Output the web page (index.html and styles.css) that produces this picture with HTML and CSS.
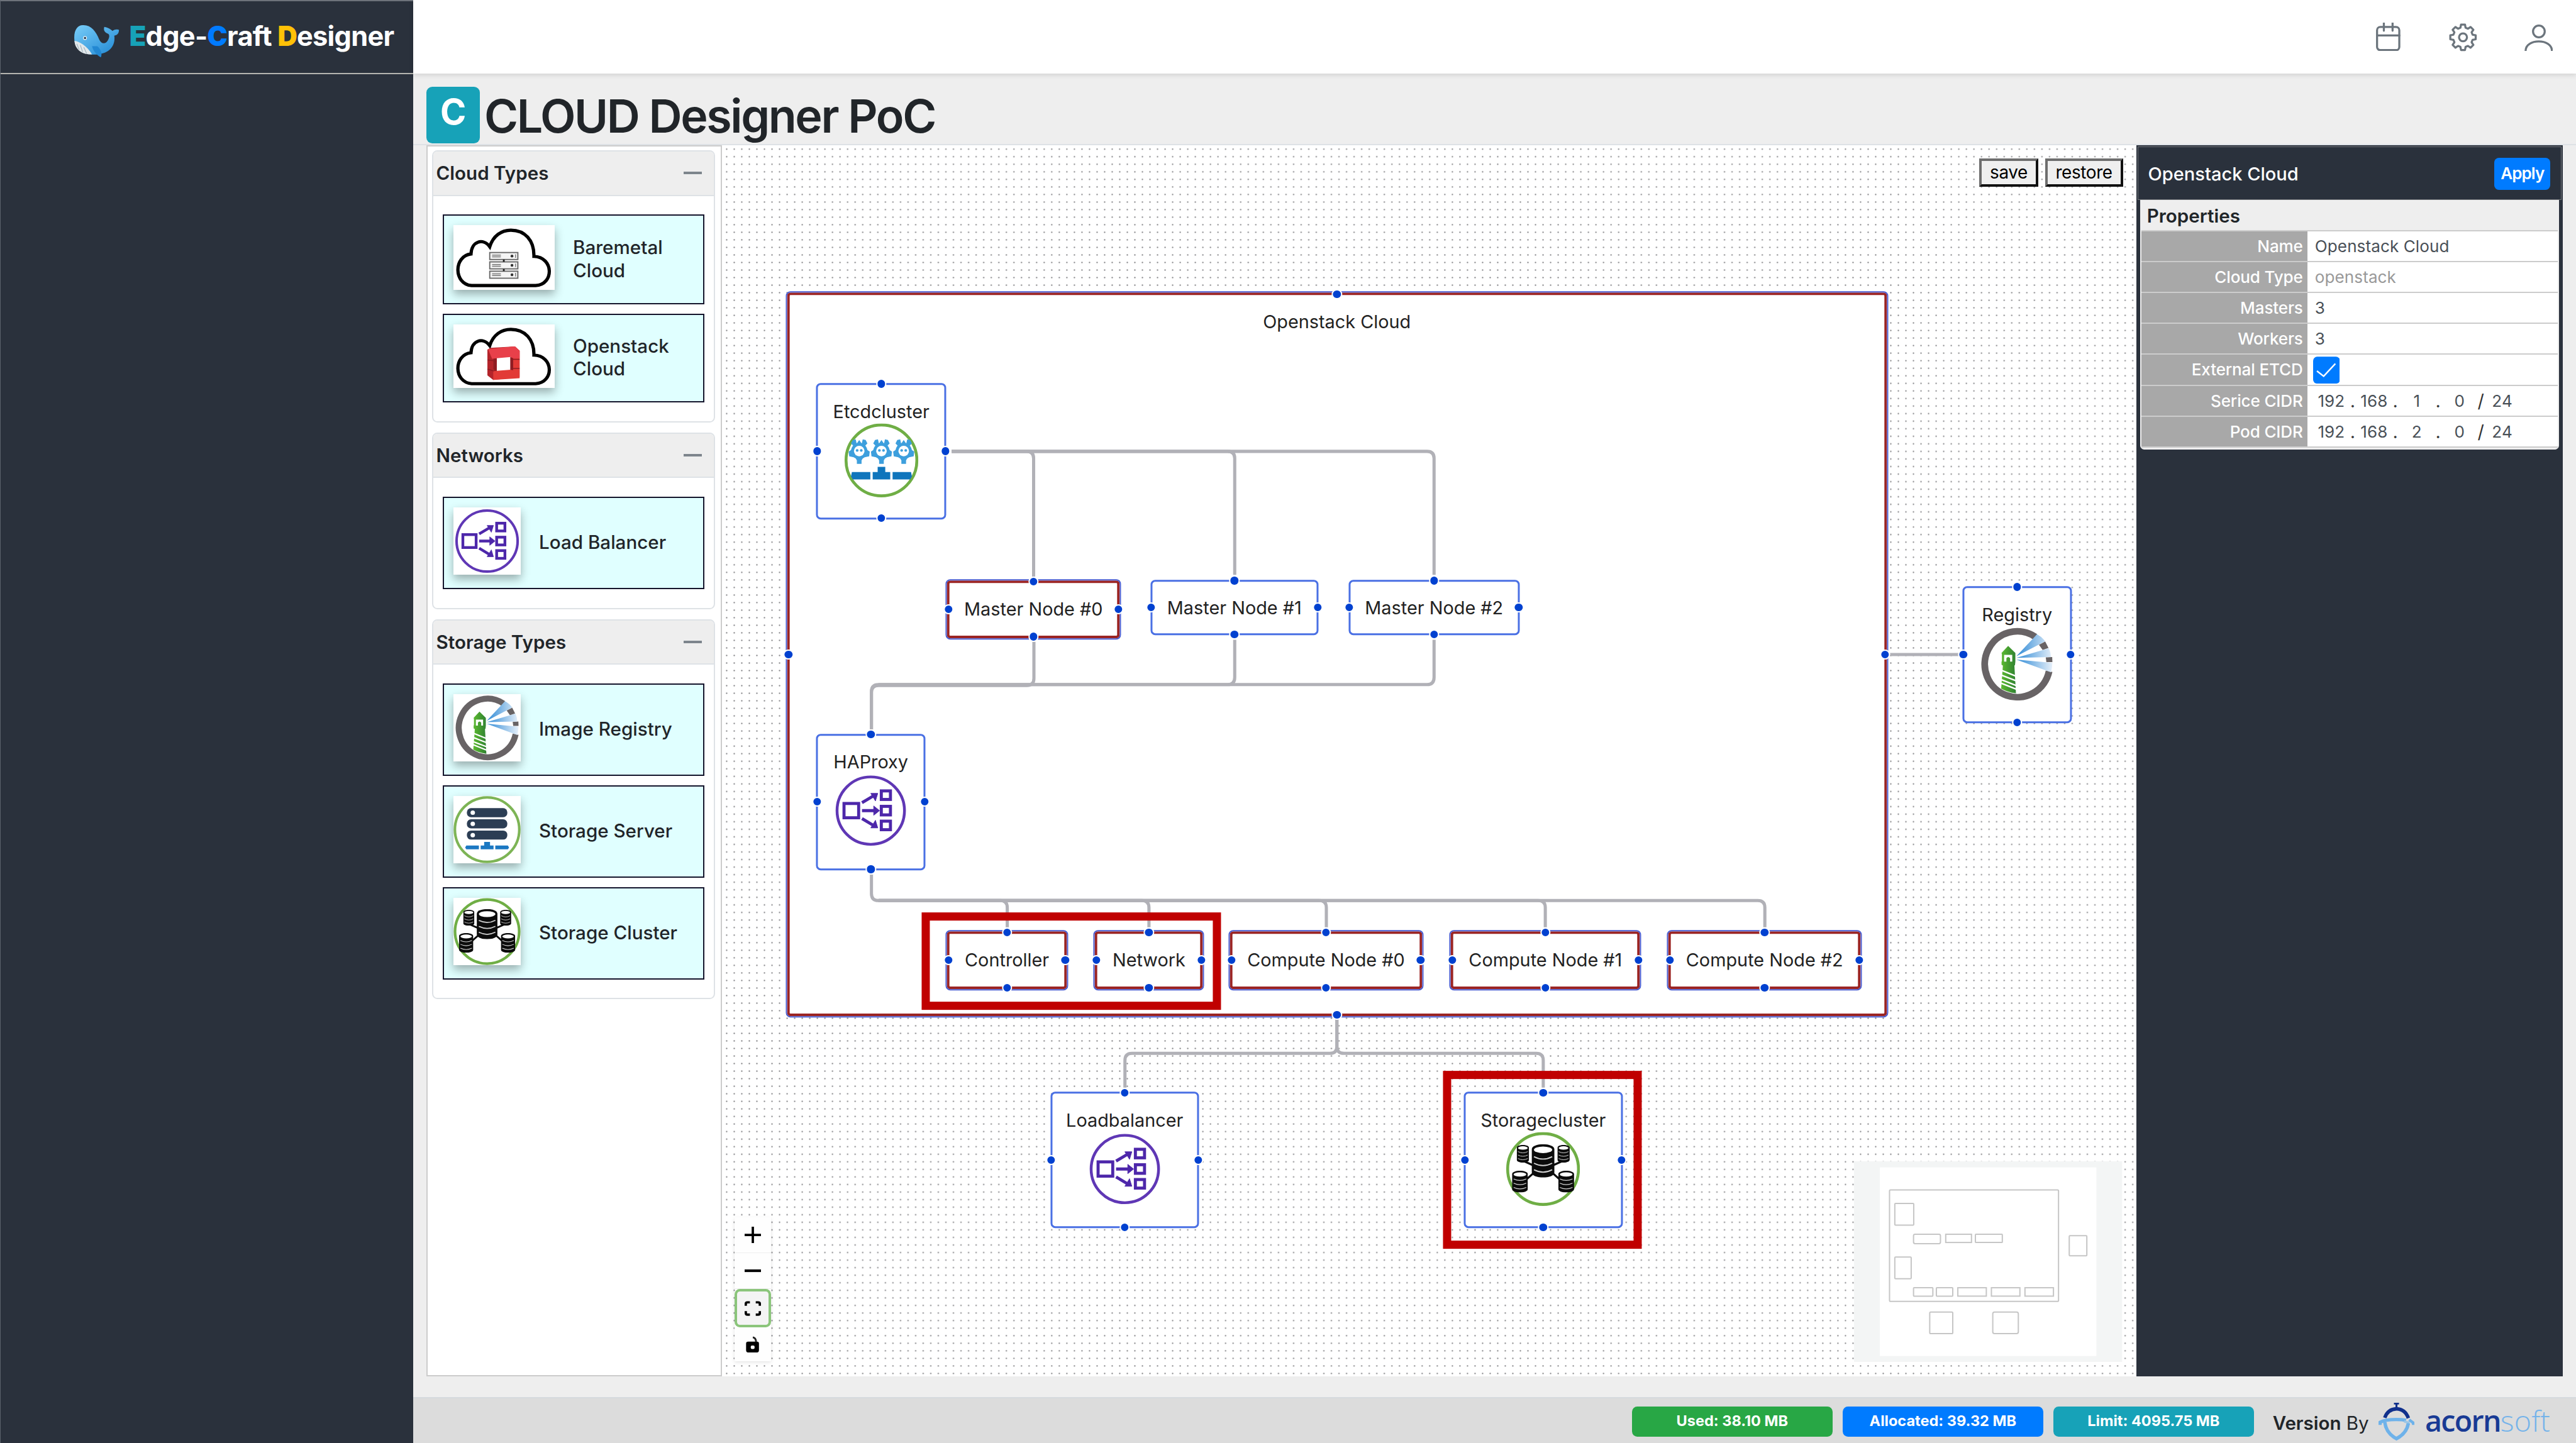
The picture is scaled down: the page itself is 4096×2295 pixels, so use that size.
FILE: index.html
```html
<!DOCTYPE html>
<html lang="en">
<head>
<meta charset="utf-8">
<title>Edge-Craft Designer</title>
<link rel="stylesheet" href="styles.css">
</head>
<body>
<svg class="defs" aria-hidden="true">
  <defs>
    <linearGradient id="whale-skin" x1="0" y1="0" x2="1" y2="1"><stop offset="0" stop-color="#79cdf8"/><stop offset="1" stop-color="#1f87d3"/></linearGradient>
    <linearGradient id="tower" x1="0" x2="1"><stop offset="0" stop-color="#5cba2f"/><stop offset="1" stop-color="#2f8132"/></linearGradient>
    <linearGradient id="beam" x1="0" x2="1"><stop offset="0" stop-color="#2f8ad6"/><stop offset="1" stop-color="#e6f0fa"/></linearGradient>
    <symbol id="cloud" viewBox="0 0 173 111" preserveAspectRatio="none">
      <path d="M31 103.6C0 101 0 53 30 49.5C31 27 51 22 62 37C68 18 82 8.7 98 8.7C122 8.7 138 26 137.5 53.6C172 55 172 102 140.3 103.6Z" fill="#fff" stroke="#000" stroke-width="5.6"/>
    </symbol>
    <symbol id="balancer" viewBox="-63.5 -63.5 127 127">
      <circle r="57.6" fill="#fff" stroke="#5f37b5" stroke-width="4.8"/>
      <g fill="none" stroke="#4d27aa" stroke-width="5.2">
        <rect x="-45.7" y="-12.2" width="25" height="24.4"/>
        <rect x="18" y="-33.7" width="15.6" height="14.6"/>
        <rect x="18" y="-7.3" width="15.6" height="14.6"/>
        <rect x="18" y="18" width="15.6" height="14.6"/>
        <path d="M-15-13.500L5-25.500M-15 0H10M-15 13.500L5 25.500"/>
      </g>
      <path d="M12-29.500L0-29.500L8-16.500ZM5-8L15 0L5 8ZM12 29.500L0 29.500L8 16.500Z" fill="#4d27aa" stroke="#4d27aa" stroke-width="1"/>
    </symbol>
    <symbol id="lighthouse" viewBox="731 326 374 386" preserveAspectRatio="none">
      <path d="M1011 379A167 171 0 1 0 1082 558" fill="none" stroke="#686365" stroke-width="35"/>
      <path d="M1030 420L1062 403L1079 437L1049 447ZM1065 486L1098 484L1099 510L1068 510Z" fill="#686365"/>
      <path d="M914 480L1020 366Q1046 380 1062 402ZM914 488L1081 438Q1091 460 1092 484ZM914 497L1099 514Q1098 540 1092 563Z" fill="url(#beam)"/>
      <path d="M872 426L909 463V508L907 526L904 528L912 672Q872 668 836 648L845 528L838 524V508L840 505V470L838 463Z" fill="url(#tower)"/>
      <path d="M851 473H893V508H882V490Q872 478 863 490V508H851Z" fill="#fff"/>
      <path d="M838 553L912 583M838 578L914 608M838 602L914 632M836 620L916 652" stroke="#fff" stroke-width="8"/>
    </symbol>
    <symbol id="disk" viewBox="0 0 40 56" preserveAspectRatio="none">
      <path d="M0 9C0-3 40-3 40 9V47C40 59 0 59 0 47Z" fill="#0b0b0b"/>
      <ellipse cx="20" cy="9.500" rx="16" ry="5.500" fill="#fff"/>
      <path d="M4 21Q20 29 36 21M4 32Q20 40 36 32M4 43Q20 51 36 43" fill="none" stroke="#d0d0d0" stroke-width="2"/>
    </symbol>
    <symbol id="cluster" viewBox="-63.5 -63.5 127 127">
      <circle r="60.5" fill="#fff" stroke="#6fae45" stroke-width="5"/>
      <path d="M-34-14L-16-6M34-14L16-6M-30 19L-14 5M30 19L14 5" stroke="#0b0b0b" stroke-width="3.500"/>
      <use href="#disk" x="-19.500" y="-42.500" width="39" height="57"/>
      <use href="#disk" x="-45" y="-41" width="21" height="30"/>
      <use href="#disk" x="24.500" y="-41" width="21" height="30"/>
      <use href="#disk" x="-53" y="3" width="27" height="37"/>
      <use href="#disk" x="26" y="3" width="27" height="37"/>
    </symbol>
    <symbol id="gear" viewBox="-19 -22 38 44">
      <g fill="#3d9fdd">
        <circle cy="-1" r="14"/>
        <path d="M-4-12L-6-21L-11-20L-14-14L-9-9ZM4-12L6-21L11-20L14-14L9-9ZM-4-14L0-20L4-14ZM-12-4L-18 0L-17 8L-8 10ZM12-4L18 0L17 8L8 10ZM-7 10L-4 15V21H4V15L7 10Z"/>
      </g>
      <circle cy="-1" r="9" fill="#fff"/>
      <circle cx="-3.500" cy="-2" r="2.300" fill="#3d9fdd"/><circle cx="3.500" cy="-2" r="2.300" fill="#3d9fdd"/>
    </symbol>
    <symbol id="etcd" viewBox="-63.5 -63.5 127 127">
      <circle r="60.5" fill="#fff" stroke="#6fae45" stroke-width="5"/>
      <use href="#gear" x="-57" y="-37" width="38" height="44"/>
      <use href="#gear" x="-19" y="-37" width="38" height="44"/>
      <use href="#gear" x="19" y="-37" width="38" height="44"/>
      <path d="M-50.500 20H-19V32.500H-49L-52 27ZM-15 20H-6.500V11H6.500V20H15V32.500H-15ZM19 20H50.500L52 27L49 32.500H19Z" fill="#0f75bc"/>
    </symbol>
  </defs>
</svg>

<div class="app">
  <aside class="sidebar">
    <div class="brand">
      <svg class="whale" viewBox="0 0 77 56">
        <path d="M1 28C-1 10 6 1 15 1C29 0 38 12 43 25C47 34 54 34 58 27C61 22 61 18 59 16C53 14 50 10 52 4C58 5 63 8 66 11C70 8 74 8 77 9C77 15 74 18 69 19C71 32 65 43 53 48C45 51 36 52 28 51C13 50 3 42 1 28Z" fill="url(#whale-skin)"/>
        <path d="M1 28C9 29 22 36 31 51C14 52 2 43 1 28Z" fill="#e2e8eb"/>
        <path d="M5 33L9 43M11 35L15 47M17 39L22 50" stroke="#9fb0ba" stroke-width="1.200"/>
        <path d="M31 37C33 45 39 52 46 56C49 50 46 42 40 37Z" fill="#2388d2"/>
        <circle cx="19" cy="23" r="3.200" fill="#fff"/><circle cx="19" cy="23" r="2" fill="#28445c"/>
      </svg>
      <span class="brand-name"><b class="teal">E</b>dge-<b class="blue">C</b>raft <b class="amber">D</b>esigner</span>
    </div>
  </aside>

  <div class="main">
    <header class="topbar">
      <svg class="calendar" viewBox="0 0 42 49"><rect x="1.800" y="7.500" width="38" height="39.500" rx="5.500"/><path d="M2 22H40M13.400 .8V13.700M28.300 .8V13.700"/></svg>
      <svg class="settings" viewBox="-24 -24 48 48"><path d="M16.400-4.400L21.700-3.400V3.400L16.400 4.400L14.700 8.500L17.750 12.940L12.940 17.750L8.500 14.700L4.400 16.400L3.400 21.700H-3.400L-4.400 16.400L-8.500 14.700L-12.940 17.750L-17.750 12.940L-14.700 8.500L-16.400 4.400L-21.700 3.400V-3.400L-16.400-4.400L-14.700-8.500L-17.750-12.940L-12.940-17.750L-8.500-14.700L-4.400-16.400L-3.400-21.700H3.400L4.400-16.400L8.500-14.700L12.940-17.750L17.750-12.940L14.700-8.500Z"/><circle r="6.800"/></svg>
      <svg class="user" viewBox="0 0 49 46"><circle cx="24.700" cy="11.800" r="10"/><path d="M2 45C2 23.500 47 23.500 47 45"/></svg>
    </header>

    <div class="title">
      <span class="title-badge"><span>C</span></span>
      <h1>CLOUD Designer PoC</h1>
    </div>

    <div class="workspace">
      <section class="palette">
        <div class="card">
          <div class="card-head"><span>Cloud Types</span><i class="collapse"></i></div>
          <div class="card-body">
            <div class="item">
              <svg class="thumb wide" viewBox="0 0 173 111" preserveAspectRatio="none">
                <use href="#cloud" width="173" height="111"/>
                <g fill="#f4f4f4" stroke="#666" stroke-width="2"><rect x="62" y="47" width="48" height="12"/><rect x="62" y="63" width="48" height="12"/><rect x="62" y="79" width="48" height="12"/></g>
                <path d="M66 51.500H81M66 54.500H81M66 67.500H81M66 70.500H81M66 83.500H81M66 86.500H81" stroke="#777" stroke-width="1.600"/>
                <path d="M86 59V63M86 75V79" stroke="#222" stroke-width="3"/>
                <g fill="#333"><circle cx="100" cy="53" r="2.400"/><circle cx="100" cy="69" r="2.400"/><circle cx="100" cy="85" r="2.400"/></g>
                <path d="M106 50V56M106 66V72M106 82V88" stroke="#777" stroke-width="1.500"/>
              </svg>
              <span>Baremetal Cloud</span>
            </div>
            <div class="item">
              <svg class="thumb wide short" viewBox="0 0 173 111" preserveAspectRatio="none">
                <use href="#cloud" width="173" height="111"/>
                <path d="M58 44L63 41L105 38.500L113 46V92L68 97L58 89Z" fill="#b3242a"/>
                <path d="M59 43L105 38.500L113 46L113 94L68 97V50Z" fill="#e23a36"/>
                <path d="M59 43L105 38.500L113 46L113 59L66 60Z" fill="#e8404a"/>
                <path d="M74 59L98 57V79L74 81Z" fill="#fff"/>
                <path d="M97 57L102 59V80L97 79ZM68 60L74 59V81L68 79Z" fill="#8f1c22"/>
                <path d="M58 62L74 64M58 78L68 81L74 80M98 61H113M98 77H113" stroke="#8f1c22" stroke-width="1.600" fill="none"/>
              </svg>
              <span>Openstack Cloud</span>
            </div>
          </div>
        </div>

        <div class="card">
          <div class="card-head"><span>Networks</span><i class="collapse"></i></div>
          <div class="card-body">
            <div class="item"><svg class="thumb"><use href="#balancer"/></svg><span>Load Balancer</span></div>
          </div>
        </div>

        <div class="card">
          <div class="card-head"><span>Storage Types</span><i class="collapse"></i></div>
          <div class="card-body">
            <div class="item"><svg class="thumb" viewBox="0 0 115 115"><use href="#lighthouse" x="3" y="0.500" width="110" height="113"/></svg><span>Image Registry</span></div>
            <div class="item">
              <svg class="thumb" viewBox="0 0 115 115">
                <circle cx="57.500" cy="57.500" r="55" fill="#fff" stroke="#7db455" stroke-width="4.400"/>
                <g fill="#2c3e54"><rect x="23" y="20.700" width="69" height="15.500" rx="7"/><rect x="23" y="39.800" width="69" height="15.500" rx="7"/><rect x="23" y="59" width="69" height="15.500" rx="7"/></g>
                <g fill="#fff"><circle cx="33" cy="28.500" r="3.800"/><circle cx="33" cy="47.600" r="3.800"/><circle cx="33" cy="66.800" r="3.800"/></g>
                <path d="M22 84.500H43.500V91H22L20 88ZM46.500 84.500H52.500V78.500H62.500V84.500H68.500V91H46.500ZM71.500 84.500H93L95 88L93 91H71.500Z" fill="#1b78c2"/>
              </svg>
              <span>Storage Server</span>
            </div>
            <div class="item"><svg class="thumb"><use href="#cluster"/></svg><span>Storage Cluster</span></div>
          </div>
        </div>
      </section>

      <section class="canvas">
        <div class="flow">
          <svg class="layer" viewBox="0 0 4400 2465">
            <defs><pattern id="grid" x="1234.240" y="248.150" width="12.912" height="12.912" patternUnits="userSpaceOnUse"><circle cx="6.456" cy="6.456" r="1.200" fill="#88888b"/></pattern></defs>
            <rect x="1232" y="247" width="2418" height="2104" fill="url(#grid)"/>
          </svg>
          <div class="node group selected n-cloud"><span>Openstack Cloud</span></div>
          <svg class="layer" viewBox="0 0 4400 2465">
            <g class="edges">
              <path d="M1625 771H1753Q1765 771 1765 783V985"/>
              <path d="M1625 771H2096.500Q2108.500 771 2108.500 783V982"/>
              <path d="M1625 771H2437Q2449 771 2449 783V982"/>
              <path d="M1765.500 1096V1159Q1765.500 1171 1753.500 1171H1500Q1488 1171 1488 1183V1246"/>
              <path d="M2108.500 1093V1157Q2108.500 1169.500 2096.500 1169.500H1500Q1488 1169.500 1488 1181.500V1246"/>
              <path d="M2449 1093V1157Q2449 1169.500 2437 1169.500H1500"/>
              <path d="M1488 1494V1526.500Q1488 1538.500 1500 1538.500H1708Q1720 1538.500 1720 1550.500V1584"/>
              <path d="M1500 1538.500H1950Q1962 1538.500 1962 1550.500V1584"/>
              <path d="M1500 1538.500H2253Q2265 1538.500 2265 1550.500V1584"/>
              <path d="M1500 1538.500H2627Q2639 1538.500 2639 1550.500V1584"/>
              <path d="M1500 1538.500H3002Q3014 1538.500 3014 1550.500V1584"/>
              <path d="M2283 1741V1787.500Q2283 1799.500 2271 1799.500H1933Q1921 1799.500 1921 1811.500V1858"/>
              <path d="M2283 1741V1787.500Q2283 1799.500 2295 1799.500H2623.500Q2635.500 1799.500 2635.500 1811.500V1858"/>
              <path d="M3228 1118H3345"/>
            </g>
          </svg>
          <div class="handles n-cloud selected"><i class="t"></i><i class="r"></i><i class="b"></i><i class="l"></i></div>

          <div class="node tall n-etcd"><span>Etcdcluster</span><svg><use href="#etcd"/></svg><i class="t"></i><i class="r"></i><i class="b"></i><i class="l"></i></div>
          <div class="node selected n-m0"><span>Master Node #0</span><i class="t"></i><i class="r"></i><i class="b"></i><i class="l"></i></div>
          <div class="node n-m1"><span>Master Node #1</span><i class="t"></i><i class="r"></i><i class="b"></i><i class="l"></i></div>
          <div class="node n-m2"><span>Master Node #2</span><i class="t"></i><i class="r"></i><i class="b"></i><i class="l"></i></div>
          <div class="node tall n-haproxy"><span>HAProxy</span><svg><use href="#balancer"/></svg><i class="t"></i><i class="r"></i><i class="b"></i><i class="l"></i></div>
          <div class="node selected n-controller"><span>Controller</span><i class="t"></i><i class="r"></i><i class="b"></i><i class="l"></i></div>
          <div class="node selected n-network"><span>Network</span><i class="t"></i><i class="r"></i><i class="b"></i><i class="l"></i></div>
          <div class="node selected n-c0"><span>Compute Node #0</span><i class="t"></i><i class="r"></i><i class="b"></i><i class="l"></i></div>
          <div class="node selected n-c1"><span>Compute Node #1</span><i class="t"></i><i class="r"></i><i class="b"></i><i class="l"></i></div>
          <div class="node selected n-c2"><span>Compute Node #2</span><i class="t"></i><i class="r"></i><i class="b"></i><i class="l"></i></div>
          <div class="node tall n-registry"><span>Registry</span><svg viewBox="0 0 127 127"><use href="#lighthouse" x="1" y="0.500" width="124.500" height="127"/></svg><i class="t"></i><i class="r"></i><i class="b"></i><i class="l"></i></div>
          <div class="node tall n-lb"><span>Loadbalancer</span><svg><use href="#balancer"/></svg><i class="t"></i><i class="r"></i><i class="b"></i><i class="l"></i></div>
          <div class="node tall n-storage"><span>Storagecluster</span><svg><use href="#cluster"/></svg><i class="t"></i><i class="r"></i><i class="b"></i><i class="l"></i></div>

          <div class="mark mark-control"></div>
          <div class="mark mark-storage"></div>
        </div>

        <div class="actions"><button>save</button><button>restore</button></div>

        <div class="controls">
          <span><svg viewBox="0 0 28 28"><path d="M14 0V28M0 14H28" stroke="#000" stroke-width="4"/></svg></span>
          <span><svg viewBox="0 0 28 28"><path d="M0 14H28" stroke="#000" stroke-width="4.500"/></svg></span>
          <span class="active"><svg viewBox="0 0 28 28"><path d="M2 9.500V6Q2 3.500 5 3.500H9M19 3.500H23Q26 3.500 26 6V9.500M26 18.500V22Q26 24.500 23 24.500H19M9 24.500H5Q2 24.500 2 22V18.500" fill="none" stroke="#000" stroke-width="4"/></svg></span>
          <span><svg viewBox="0 0 28 28"><rect x="2.500" y="9.500" width="22" height="18.500" rx="3.500"/><path d="M14 2Q19.500 3 19.500 10" fill="none" stroke="#222" stroke-width="3"/><rect x="10.500" y="16" width="6.500" height="6" rx="2" fill="#fff"/></svg></span>
        </div>

        <svg class="minimap" viewBox="82 72 1374 1030" preserveAspectRatio="none">
          <rect x="82" y="72" width="1374" height="1030" fill="#f3f5f5"/>
          <rect x="214" y="103" width="1110" height="967" fill="#fff"/>
          <g fill="#fff" stroke="#c6c6c6" stroke-width="6.500">
            <rect x="264" y="219" width="866" height="571" rx="5"/>
            <rect x="291" y="288" width="97" height="111" rx="4"/>
            <rect x="387" y="446" width="138" height="48" rx="8"/>
            <rect x="552" y="446" width="132" height="42"/>
            <rect x="704" y="446" width="138" height="42" rx="3"/>
            <rect x="291" y="563" width="84" height="111" rx="4"/>
            <rect x="387" y="720" width="99" height="43" rx="3"/>
            <rect x="504" y="720" width="84" height="43" rx="3"/>
            <rect x="614" y="720" width="146" height="43"/>
            <rect x="786" y="720" width="146" height="43"/>
            <rect x="958" y="720" width="146" height="43"/>
            <rect x="1185" y="453" width="90" height="103" rx="4"/>
            <rect x="470" y="845" width="118" height="110" rx="5"/>
            <rect x="793" y="845" width="131" height="110" rx="9"/>
          </g>
        </svg>
      </section>

      <section class="inspector">
        <div class="inspector-head"><span>Openstack Cloud</span><button>Apply</button></div>
        <div class="props">
          <div class="props-title">Properties</div>
          <div class="row"><label>Name</label><div>Openstack Cloud</div></div>
          <div class="row"><label>Cloud Type</label><div class="muted">openstack</div></div>
          <div class="row"><label>Masters</label><div>3</div></div>
          <div class="row"><label>Workers</label><div>3</div></div>
          <div class="row check"><label>External ETCD</label><div><svg viewBox="0 0 46 46"><rect width="46" height="46" rx="7" fill="#007bff"/><path d="M6.500 24.500L18 33.500L38 12" fill="none" stroke="#fff" stroke-width="2.600"/></svg></div></div>
          <div class="row"><label>Serice CIDR</label><div class="cidr"><b>192</b><s>.</s><b>168</b><s>.</s><b>1</b><s>.</s><b>0</b><s>/</s><b>24</b></div></div>
          <div class="row"><label>Pod CIDR</label><div class="cidr"><b>192</b><s>.</s><b>168</b><s>.</s><b>2</b><s>.</s><b>0</b><s>/</s><b>24</b></div></div>
        </div>
      </section>
    </div>

    <footer class="footer">
      <span class="pill green">Used: 38.10 MB</span>
      <span class="pill primary">Allocated: 39.32 MB</span>
      <span class="pill info">Limit: 4095.75 MB</span>
      <span class="version"><b>Version</b> By</span>
      <svg class="acorn" viewBox="69 47 186 195" preserveAspectRatio="none">
        <g fill="none">
          <path d="M77 161V147Q100 133 161 133Q190 133 210 137" stroke="#6eb2ea" stroke-width="17"/>
          <path d="M200 143L228 150" stroke="#9cc6e6" stroke-width="12"/>
          <path d="M226 134L247 150V161" stroke="#6eb2ea" stroke-width="14"/>
          <path d="M101 146Q108 203 161 231Q214 203 222 152" stroke="#6eb2ea" stroke-width="18"/>
          <path d="M101 124Q116 80 161 78Q206 80 222 126" stroke="#10308c" stroke-width="18"/>
          <path d="M148 51H174M161 50V76" stroke="#10308c" stroke-width="10"/>
        </g>
      </svg>
      <span class="wordmark"><b>acorn</b>soft</span>
    </footer>
  </div>
</div>
</body>
</html>
```
FILE: styles.css
```css
html { font-size: 9.3091px; }

* { box-sizing: border-box; }

body {
  margin: 0;
  font-family: Inter, "Liberation Sans", sans-serif;
  font-size: 3.1rem;
  color: #212529;
  background: #eee;
  overflow: hidden;
}

.defs { position: absolute; width: 0; height: 0; }

.app { display: flex; width: 100vw; height: 100vh; }

/* Sidebar */
.sidebar {
  width: 70.6rem;
  flex: none;
  background: #2a313c;
  border-top: .22rem solid #6d727a;
  border-left: .11rem solid #5a616b;
}
.brand {
  display: flex;
  align-items: center;
  height: 12.45rem;
  padding: 0 0 .3rem 12.5rem;
  border-bottom: .25rem solid #b5b5b1;
}
.whale { width: 7.8rem; height: 5.6rem; margin: 1.7rem 1.7rem 0 0; flex: none; }
.brand-name {
  font-weight: 700;
  font-size: 4.65rem;
  letter-spacing: -.075rem;
  line-height: 6rem;
  color: #fff;
  white-space: nowrap;
}
.teal { color: #17a2b8; }
.blue { color: #007bff; }
.amber { color: #ffc107; }

/* Main column */
.main { flex: 1; min-width: 0; display: flex; flex-direction: column; }

.topbar {
  flex: none;
  height: 12.6rem;
  display: flex;
  align-items: center;
  justify-content: flex-end;
  padding-right: 3.95rem;
  background: #fff;
  box-shadow: 0 .3rem .8rem rgba(0, 0, 0, .13);
}
.topbar svg { fill: none; stroke: #6c757d; stroke-width: 3.5; stroke-linejoin: round; stroke-linecap: round; flex: none; }
.calendar { width: 4.2rem; height: 4.9rem; margin-right: 8.3rem; }
.settings { width: 4.8rem; height: 4.8rem; margin: .2rem 8rem 0 0; }
.user { width: 4.9rem; height: 4.6rem; margin-top: .3rem; }

.title {
  flex: none;
  height: 12.2rem;
  display: flex;
  align-items: flex-start;
  padding: 2.27rem 0 0 2.27rem;
  border-bottom: .22rem solid #dee2e6;
}
.title-badge {
  width: 9.1rem;
  height: 9.65rem;
  border-radius: 1rem;
  background: #17a2b8;
  color: #fff;
  font-weight: 700;
  font-size: 6rem;
  line-height: 8.5rem;
  text-align: center;
}
.title h1 {
  margin: 0 0 0 .75rem;
  font-weight: 560;
  font-size: 7.9rem;
  letter-spacing: -.258rem;
  line-height: 10rem;
}

.workspace {
  flex: none;
  height: 210.3rem;
  display: grid;
  grid-template-columns: 50.4rem 1fr 72.8rem;
  padding: 0 2.3rem 0 2.27rem;
}

/* Palette */
.palette {
  display: flex;
  flex-direction: column;
  gap: 1.7rem;
  padding: .65rem .95rem .65rem .7rem;
  background: #fff;
  border: .25rem solid #ccc;
}
.card { border: .22rem solid #dee2e6; border-radius: .9rem; overflow: hidden; }
.card-head {
  height: 7.6rem;
  display: flex;
  align-items: center;
  justify-content: space-between;
  padding: 0 2rem 0 .5rem;
  background: #eee;
  border-bottom: .22rem solid #dee2e6;
  font-size: 3.17rem;
  font-weight: 600;
  letter-spacing: .005rem;
}
.collapse { width: 3.15rem; height: .4rem; background: #7d858c; }
.card-body { display: flex; flex-direction: column; gap: 1.6rem; padding: 3.2rem 1.55rem 3.2rem 1.65rem; }
.item {
  display: flex;
  align-items: flex-start;
  gap: 3.1rem;
  padding: 1.6rem 4rem 2.25rem 1.6rem;
  background: #e0ffff;
  border: .22rem solid #14142b;
  font-size: 3.18rem;
  font-weight: 500;
  line-height: 3.93rem;
}
.item span { align-self: center; margin-top: .4rem; }
.thumb {
  flex: none;
  display: block;
  width: 11.5rem;
  height: 11.5rem;
  background: #fff;
  box-shadow: 0 .8rem 1.5rem rgba(0, 0, 0, .32);
}
.thumb.wide { width: 17.3rem; height: 11.07rem; }
.thumb.short { height: 10.85rem; }

/* Canvas */
.canvas { position: relative; overflow: hidden; background: #fff; }
.flow { position: absolute; left: 0; top: 0; transform: translate(-123.27rem, -24.8rem); }
.layer { position: absolute; left: 0; top: 0; width: 440rem; height: 246.5rem; }
.edges { fill: none; stroke: #b1b1b7; stroke-width: 5.4; }

.node, .handles {
  position: absolute;
  left: var(--x);
  top: var(--y);
  width: var(--w);
  height: var(--h);
  --inset: .15rem;
}
.node {
  display: flex;
  flex-direction: column;
  align-items: center;
  justify-content: center;
  background: #fff;
  border: .33rem solid #4a70e4;
  border-radius: .8rem;
  color: #222;
  font-size: 3.1rem;
  line-height: 4rem;
  white-space: nowrap;
}
.node.selected {
  border: .22rem solid #4a5cd0;
  box-shadow: inset 0 0 0 .45rem #9b2423;
}
.selected { --inset: .5rem; }
.node.group { justify-content: flex-start; padding-top: 3rem; }
.node.tall { justify-content: flex-start; padding-top: 2.55rem; }
.node svg { width: 12.7rem; height: 12.7rem; flex: none; margin-top: -.05rem; }

.node i, .handles i {
  position: absolute;
  width: 1.75rem;
  height: 1.75rem;
  border: .22rem solid #fff;
  border-radius: 50%;
  background: #0041d0;
  transform: translate(-50%, -50%);
}
.node { --edge: .33rem; }
.node.selected { --edge: .22rem; }
.handles { --edge: 0rem; }
i.t { left: 50%; top: calc(var(--inset) - var(--edge)); }
i.b { left: 50%; top: calc(100% - var(--inset) + var(--edge)); }
i.l { top: 50%; left: calc(var(--inset) - var(--edge)); }
i.r { top: 50%; left: calc(100% - var(--inset) + var(--edge)); }

.n-cloud { --x: 134.2rem; --y: 49.8rem; --w: 188.3rem; --h: 124.05rem; }
.n-etcd { --x: 139.4rem; --y: 65.45rem; --w: 22.25rem; --h: 23.25rem; }
.n-m0 { --x: 161.55rem; --y: 98.9rem; --w: 29.95rem; --h: 10.35rem; }
.n-m1 { --x: 196.5rem; --y: 99.05rem; --w: 28.7rem; --h: 9.5rem; }
.n-m2 { --x: 230.35rem; --y: 99.05rem; --w: 29.2rem; --h: 9.5rem; }
.n-haproxy { --x: 139.4rem; --y: 125.35rem; --w: 18.7rem; --h: 23.3rem; }
.n-controller { --x: 161.55rem; --y: 158.85rem; --w: 20.9rem; --h: 10.4rem; }
.n-network { --x: 186.8rem; --y: 158.85rem; --w: 18.9rem; --h: 10.4rem; }
.n-c0 { --x: 209.85rem; --y: 158.85rem; --w: 33.3rem; --h: 10.4rem; }
.n-c1 { --x: 247.6rem; --y: 158.85rem; --w: 32.75rem; --h: 10.4rem; }
.n-c2 { --x: 284.75rem; --y: 158.85rem; --w: 33.3rem; --h: 10.4rem; }
.n-registry { --x: 335.2rem; --y: 100.15rem; --w: 18.65rem; --h: 23.4rem; }
.n-lb { --x: 179.4rem; --y: 186.55rem; --w: 25.4rem; --h: 23.25rem; }
.n-storage { --x: 250.05rem; --y: 186.55rem; --w: 27.1rem; --h: 23.25rem; }

.mark { position: absolute; border: 1.4rem solid #c00000; }
.mark-control { left: 157.4rem; top: 155.9rem; width: 51.2rem; height: 16.6rem; }
.mark-storage { left: 246.5rem; top: 182.95rem; width: 33.9rem; height: 30.4rem; }

.actions { position: absolute; top: 2.3rem; right: 2.3rem; display: flex; gap: 1.15rem; }
.actions button {
  height: 4.8rem;
  width: 10.1rem;
  padding: 0;
  background: #efefef;
  border: .44rem solid;
  border-color: #6e6e6e #111 #111 #6e6e6e;
  color: #000;
  font: 400 3rem/3.8rem Inter, "Liberation Sans", sans-serif;
  letter-spacing: -.04rem;
}
.actions button + button { width: 13.3rem; }

.controls {
  position: absolute;
  left: 2.25rem;
  bottom: 2.5rem;
  width: 6.2rem;
  box-shadow: 0 .2rem .6rem rgba(0, 0, 0, .12);
}
.controls span {
  display: flex;
  align-items: center;
  justify-content: center;
  height: 6.1rem;
  background: #fefefe;
  border-bottom: .15rem solid #eee;
}
.controls .active { height: 6.6rem; background: #f4f4f4; border: .44rem solid #8bc57b; border-radius: .9rem; }
.controls span:last-child { height: 5.8rem; border: 0; }
.controls svg { width: 2.8rem; height: 2.8rem; }

.minimap { position: absolute; right: 2.4rem; bottom: 2.4rem; width: 45.8rem; height: 34.33rem; }

/* Inspector */
.inspector { background: #2a313c; padding: .2rem; }
.inspector-head {
  display: flex;
  align-items: center;
  justify-content: space-between;
  height: 9.15rem;
  padding: .2rem 1.75rem 0 1.7rem;
  border: .15rem solid #73767a;
  color: #fff;
  font-size: 3.12rem;
  font-weight: 500;
}
.inspector-head button {
  width: 9.6rem;
  height: 5.5rem;
  padding: 0 0 .1rem;
  border: 0;
  border-radius: .8rem;
  background: #007bff;
  color: #fff;
  font: 600 2.8rem Inter, "Liberation Sans", sans-serif;
  letter-spacing: -.1rem;
}
.props {
  margin: 0 .45rem;
  padding: 0 .2rem .3rem .25rem;
  background: #eee;
  border-radius: 0 0 .7rem .7rem;
}
.props-title {
  height: 5.2rem;
  padding-left: .9rem;
  font-size: 3.18rem;
  font-weight: 600;
  line-height: 5.5rem;
}
.row {
  display: flex;
  height: 5.25rem;
  border-top: .22rem solid #ccc;
  background: #fff;
  font-size: 2.8rem;
  line-height: 5.05rem;
  color: #495057;
}
.row.check { height: 5.4rem; }
.row label {
  width: 28.35rem;
  padding-right: .8rem;
  background: #a8a8a8;
  color: #fff;
  font-weight: 500;
  letter-spacing: -.015rem;
  text-align: right;
}
.row div { padding-left: 1.25rem; letter-spacing: .01rem; }
.row:last-child { height: 5.5rem; border-bottom: .22rem solid #ccc; }
.row .muted { color: #999; }
.row svg { display: block; width: 4.6rem; height: 4.65rem; margin: .3rem 0 0 -.35rem; }
.row .cidr { display: flex; padding-left: 1.05rem; }
.cidr b { width: 6rem; font-weight: 400; text-align: center; }
.cidr s { width: 1.3rem; text-decoration: none; font-size: 3.1rem; color: #333; display: flex; justify-content: center; }

/* Footer */
.footer {
  flex: 1;
  margin-top: 3.6rem;
  display: flex;
  align-items: center;
  justify-content: flex-end;
  padding: .35rem 4.4rem 0 0;
  background: #dcdcdc;
  border-top: .22rem solid #d5dade;
}
.pill {
  width: 34.3rem;
  height: 5.1rem;
  margin-right: 1.69rem;
  border-radius: .9rem;
  color: #fff;
  font-size: 2.53rem;
  font-weight: 700;
  line-height: 4.9rem;
  text-align: center;
}
.green { background: #28a745; }
.primary { background: #007bff; }
.info { background: #17a2b8; }
.version { margin: .5rem 1.6rem 0 1.5rem; font-size: 3.17rem; white-space: nowrap; }
.version b { font-weight: 600; }
.acorn { width: 6.2rem; height: 6.5rem; margin-top: .1rem; }
.wordmark {
  margin: -.3rem 0 0 1.8rem;
  font: 300 5rem/6rem "Open Sans", Inter, sans-serif;
  letter-spacing: .02rem;
  color: #74b3ea;
}
.wordmark b { font-weight: 600; color: #183a94; letter-spacing: -.18rem; }
```
